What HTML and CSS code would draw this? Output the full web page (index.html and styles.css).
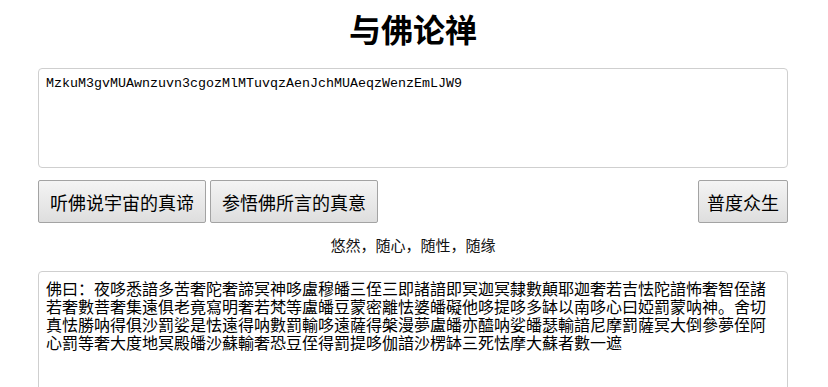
FILE: index.html
```html
<!DOCTYPE html>
<html lang="zh-CN">
<head>
    <meta charset="UTF-8">
    <title>与佛论禅</title>
    <link rel="stylesheet" href="styles.css">
</head>
<body>
    <div class="container">
        <h1>与佛论禅</h1>
        <textarea class="plain" id="plain">MzkuM3gvMUAwnzuvn3cgozMlMTuvqzAenJchMUAeqzWenzEmLJW9</textarea>
        <div class="actions">
            <button type="button" id="listen">听佛说宇宙的真谛</button>
            <button type="button" id="learn">参悟佛所言的真意</button>
            <button type="button" class="save" id="save">普度众生</button>
        </div>
        <p class="motto">悠然，随心，随性，随缘</p>
        <textarea class="cipher" id="cipher">佛曰：夜哆悉諳多苦奢陀奢諦冥神哆盧穆皤三侄三即諸諳即冥迦冥隸數顛耶迦奢若吉怯陀諳怖奢智侄諸若奢數菩奢集遠俱老竟寫明奢若梵等盧皤豆蒙密離怯婆皤礙他哆提哆多缽以南哆心曰婭罰蒙呐神。舍切真怯勝呐得俱沙罰娑是怯遠得呐數罰輸哆遠薩得槃漫夢盧皤亦醯呐娑皤瑟輸諳尼摩罰薩冥大倒參夢侄阿心罰等奢大度地冥殿皤沙蘇輸奢恐豆侄得罰提哆伽諳沙楞缽三死怯摩大蘇者數一遮</textarea>
    </div>
</body>
</html>
```

FILE: styles.css
```css
body {
    margin: 0;
    background: #fff;
    font-family: "Noto Sans CJK SC", "Liberation Sans", sans-serif;
    color: #000;
}

.container {
    width: 750px;
    padding-right: 2px;
    margin: 0 auto;
}

h1 {
    margin: 0;
    line-height: 56px;
    font-size: 32px;
    font-weight: bold;
    text-align: center;
}

textarea {
    display: block;
    width: 750px;
    box-sizing: border-box;
    border: 1px solid #cfcfcf;
    border-radius: 4px;
    padding: 7px 7px;
    resize: none;
    color: #000;
    outline: none;
}

.plain {
    margin-top: 12px;
    height: 100px;
    font-family: "Liberation Mono", monospace;
    font-size: 13.33px;
    line-height: 16px;
}

.cipher {
    margin-top: 13px;
    height: 200px;
    font-family: "Noto Sans CJK SC", "Noto Sans CJK TC", sans-serif;
    font-size: 16px;
    line-height: 18px;
}

.actions {
    display: flex;
    gap: 4px;
    margin-top: 12px;
}

button {
    height: 43px;
    padding: 0 11px;
    font-family: "Noto Sans CJK SC", sans-serif;
    font-size: 18px;
    color: #000;
    background: linear-gradient(#f4f4f4, #dedede);
    border: 1px solid #a3a3a3;
    border-radius: 2px;
    cursor: pointer;
}

.save {
    margin-left: auto;
    padding: 0 8px;
}

.motto {
    margin: 9px 0 0;
    line-height: 26px;
    height: 26px;
    font-size: 15px;
    text-align: center;
    color: #111;
}
```
